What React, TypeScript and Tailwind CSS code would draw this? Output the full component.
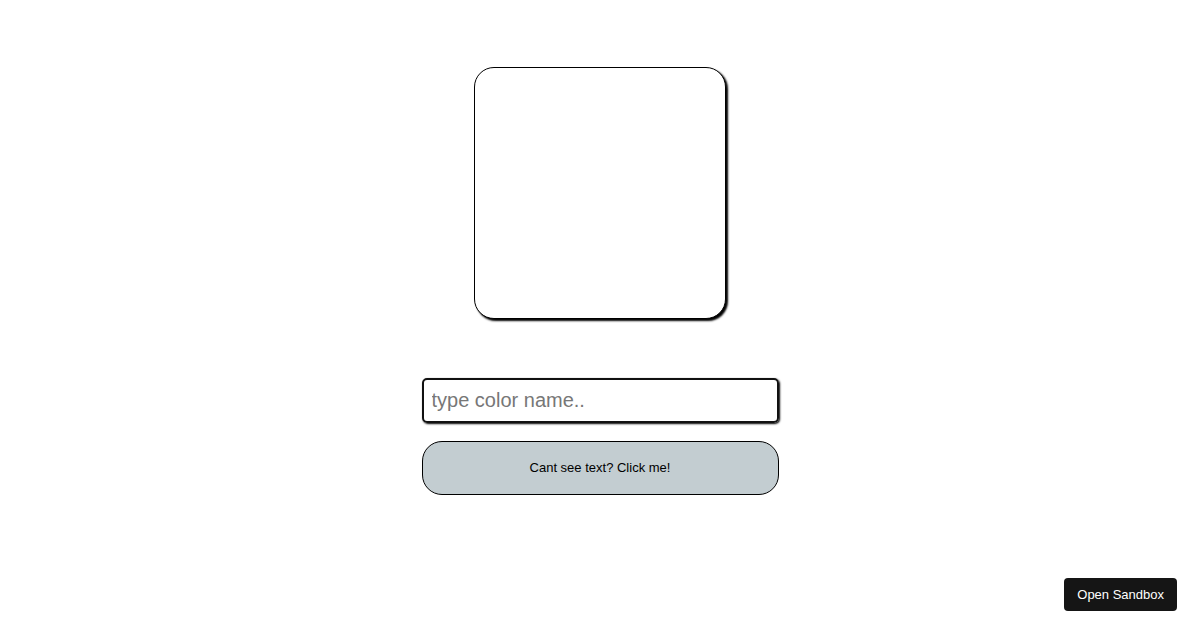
import React, { useState } from 'react';

const App: React.FC = () => {
  const [color, setColor] = useState('');
  const [dark, setDark] = useState(false);

  return (
    <div className="relative min-h-[630px] w-full bg-white font-['Liberation_Sans',Arial,sans-serif]">
      <div className="flex flex-col items-center pt-[67px]">
        <div
          className="h-[252px] w-[252px] rounded-[20px] border border-black shadow-[2px_2px_2px_#000]"
          style={{ backgroundColor: color || 'white' }}
        />
        <input
          type="text"
          value={color}
          onChange={(e) => setColor(e.target.value)}
          placeholder="type color name.."
          className="mt-[59px] h-[45px] w-[357px] rounded-[5px] border-2 border-[#111] px-[8px] text-[20px] text-black shadow-[1px_1px_2px_#000] outline-none placeholder:text-[#777]"
        />
        <button
          onClick={() => setDark(!dark)}
          className={`mt-[18px] h-[54px] w-[357px] rounded-[20px] border border-black text-[13px] ${
            dark ? 'bg-[#333] text-white' : 'bg-[#c3cdd1] text-black'
          }`}
        >
          Cant see text? Click me!
        </button>
      </div>
      <button className="absolute bottom-[19px] right-[23px] h-[33px] rounded-[4px] bg-[#151515] px-[13px] text-[13px] text-white">
        Open Sandbox
      </button>
    </div>
  );
};

export default App;
